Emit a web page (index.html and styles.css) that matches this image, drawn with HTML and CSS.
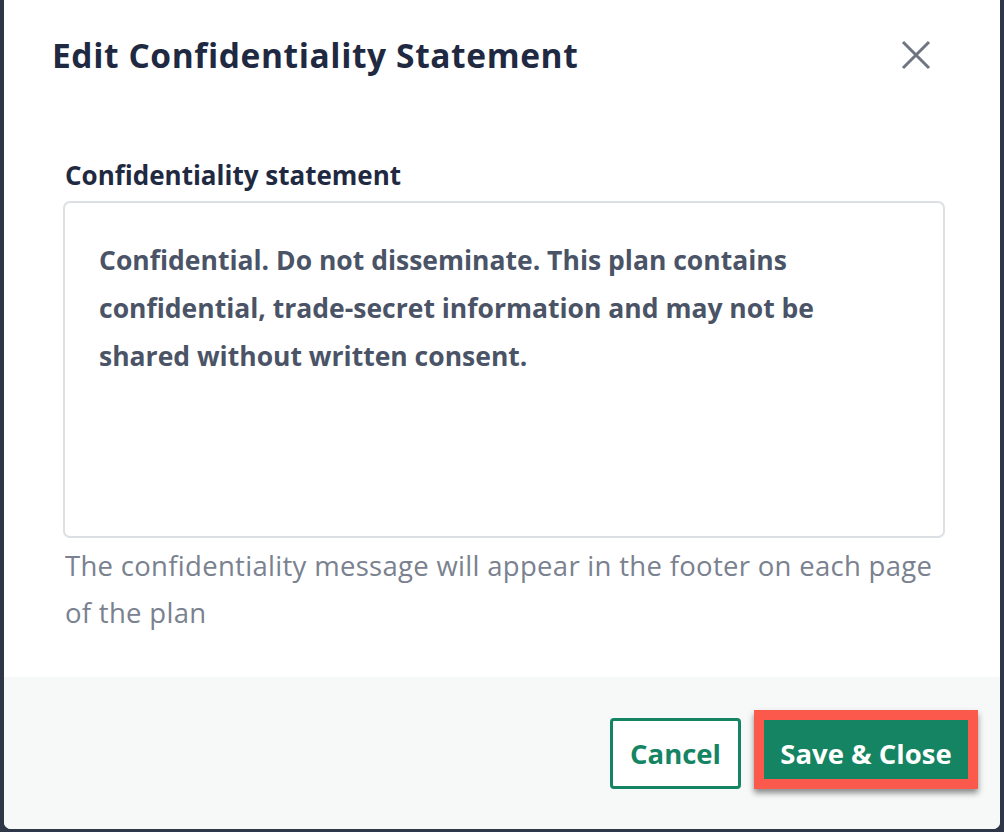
FILE: index.html
```html
<!DOCTYPE html>
<html lang="en">
<head>
<meta charset="utf-8">
<title>Edit Confidentiality Statement</title>
<link rel="stylesheet" href="styles.css">
</head>
<body>
<div class="modal">
  <div class="modal-header">
    <h1 class="modal-title">Edit Confidentiality Statement</h1>
    <button class="close-btn" aria-label="Close">
      <svg width="30" height="30" viewBox="0 0 30 30"><path d="M2 2 L28 28 M28 2 L2 28" stroke="#6e7480" stroke-width="3" stroke-linecap="butt" fill="none"/></svg>
    </button>
  </div>
  <div class="modal-body">
    <label class="field-label">Confidentiality statement</label>
    <div class="textarea">Confidential. Do not disseminate. This plan contains confidential, trade-secret information and may not be shared without written consent.</div>
    <p class="help">The confidentiality message will appear in the footer on each page of the plan</p>
  </div>
  <div class="modal-footer">
    <button class="btn btn-cancel">Cancel</button>
    <button class="btn btn-save">Save &amp; Close</button>
  </div>
</div>
</body>
</html>
```
FILE: styles.css
```css
html, body {
  margin: 0;
  padding: 0;
  height: 100%;
}
body {
  background: #2e3748;
  font-family: "Open Sans", Lato, sans-serif;
  overflow: hidden;
}
.modal {
  margin-left: 4px;
  width: 996px;
  height: 829px;
  background: #ffffff;
  border-radius: 0 0 7px 7px;
  display: flex;
  flex-direction: column;
  overflow: hidden;
}
.modal-header {
  display: flex;
  justify-content: space-between;
  align-items: center;
  padding: 34px 69px 0 48px;
  height: 42px;
}
.modal-title {
  margin: 0;
  font-size: 33.5px;
  font-weight: 700;
  letter-spacing: 0.6px;
  line-height: 42px;
  color: #1f2a42;
}
.close-btn {
  background: none;
  border: 0;
  padding: 0;
  width: 30px;
  height: 30px;
  display: flex;
}
.modal-body {
  padding: 0 55px 0 59px;
  flex: 1;
  display: flex;
  flex-direction: column;
}
.field-label {
  font-size: 26px;
  font-weight: 700;
  color: #1f2a42;
  margin-top: 84px;
  line-height: 30px;
  margin-left: 2px;
}
.textarea {
  margin-top: 11px;
  width: 882px;
  height: 337px;
  box-sizing: border-box;
  border: 2px solid #dcdfe3;
  border-radius: 7px;
  padding: 33px 50px 29px 34px;
  font-size: 26.5px;
  font-weight: 700;
  line-height: 48px;
  color: #4a5466;
}
.help {
  margin: 4px 0 0 2px;
  font-size: 27.5px;
  letter-spacing: 0.3px;
  line-height: 47px;
  color: #7a818f;
}
.modal-footer {
  height: 152px;
  background: #f7f8f8;
  display: flex;
  justify-content: flex-end;
  align-items: flex-start;
  padding: 33px 22px 0 0;
  box-sizing: border-box;
  gap: 13px;
}
.btn {
  font-family: inherit;
  font-weight: 700;
  font-size: 27.5px;
  cursor: pointer;
}
.btn-cancel {
  margin-top: 8px;
  width: 131px;
  height: 71px;
  padding: 0;
  background: #ffffff;
  border: 3px solid #158462;
  border-radius: 4px;
  color: #158462;
}
.btn-save {
  width: 224px;
  height: 79px;
  padding: 8px 0 0;
  background: #158462;
  border: 10px solid #fb594c;
  color: #ffffff;
  box-shadow: 0 4px 6px rgba(0, 0, 0, 0.45);
}
```
